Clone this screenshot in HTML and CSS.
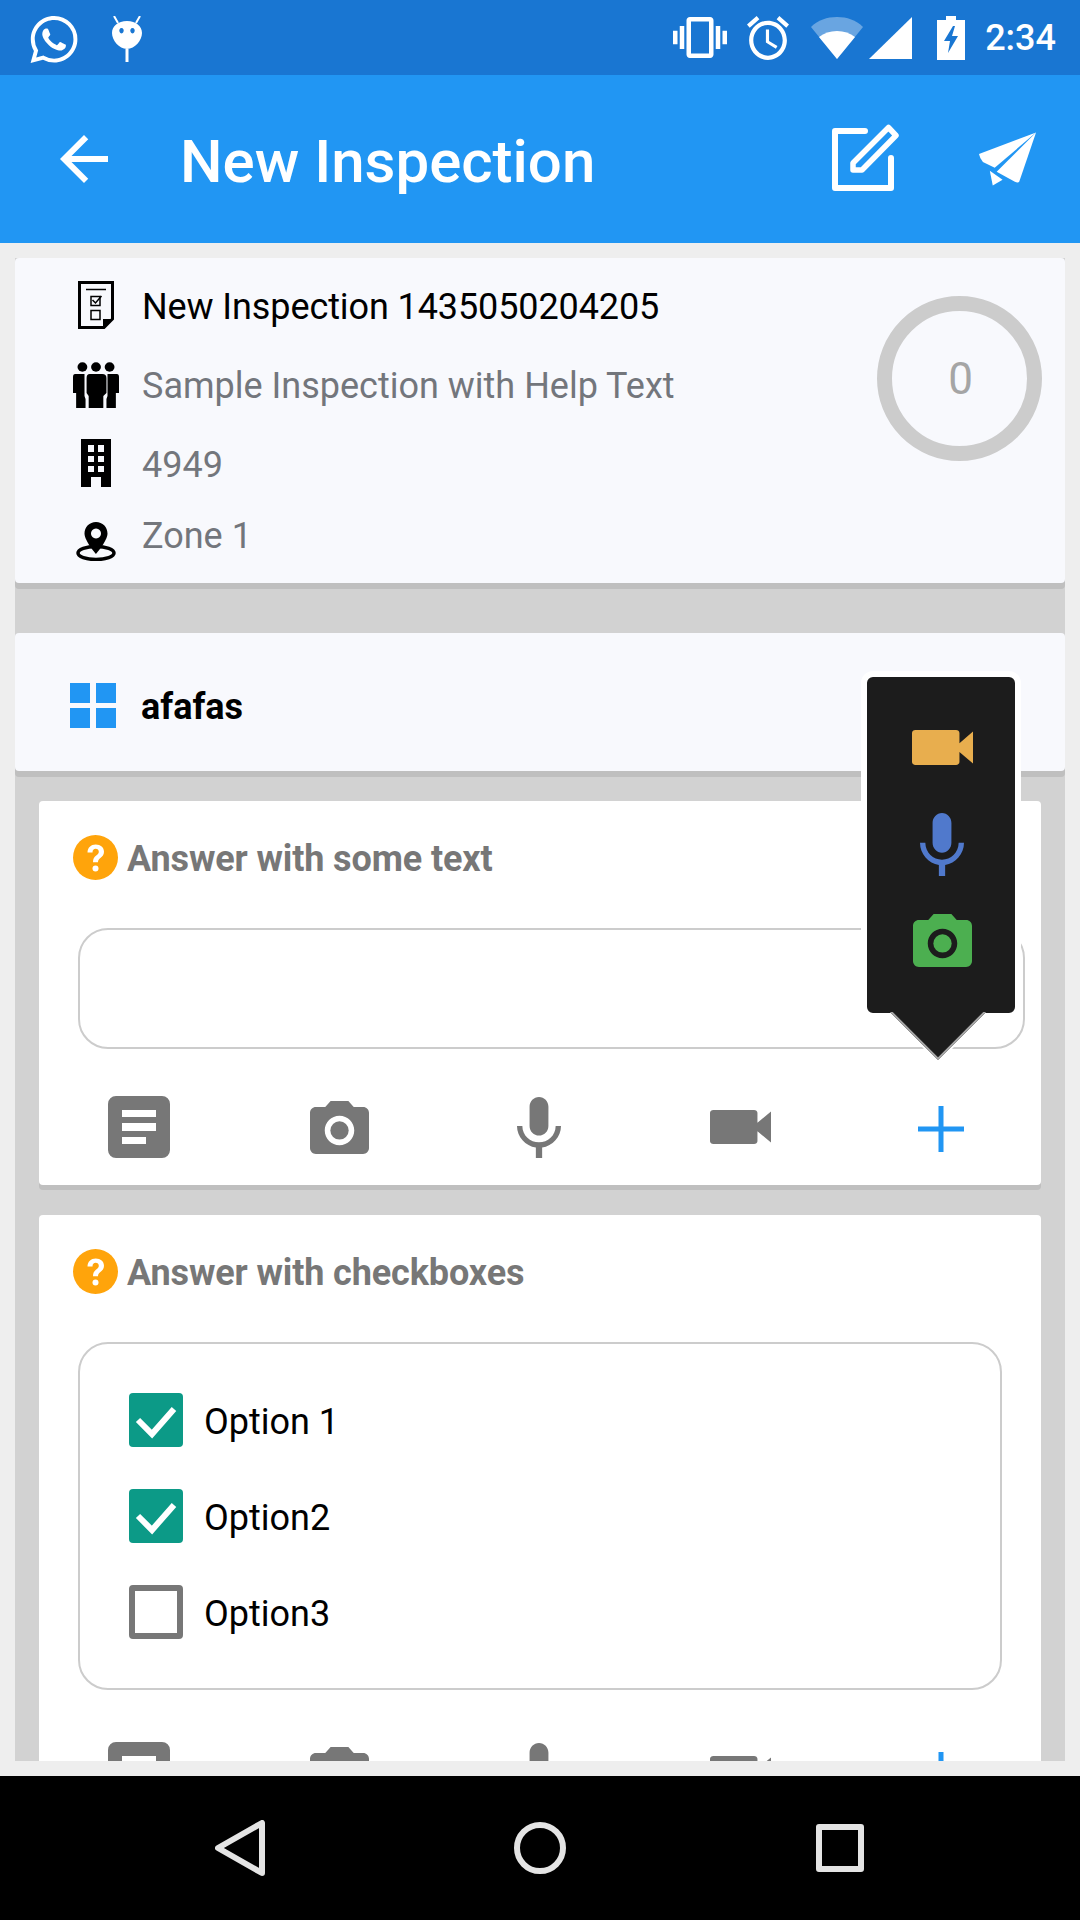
FILE: index.html
```html
<!DOCTYPE html>
<html lang="en">
<head>
<meta charset="utf-8">
<title>New Inspection</title>
<link rel="stylesheet" href="styles.css">
</head>
<body>
<svg class="sprite" aria-hidden="true">
  <symbol id="video" viewBox="3 6 18 12" preserveAspectRatio="none"><path d="M17 10.5V7c0-.55-.45-1-1-1H4c-.55 0-1 .45-1 1v10c0 .55.45 1 1 1h12c.55 0 1-.45 1-1v-3.5l4 4v-11l-4 4z"/></symbol>
  <symbol id="mic" viewBox="5 2 14 19" preserveAspectRatio="none"><path d="M12 14c1.66 0 2.99-1.34 2.99-3L15 5c0-1.66-1.34-3-3-3S9 3.34 9 5v6c0 1.66 1.34 3 3 3zm5.3-3c0 3-2.54 5.1-5.3 5.1S6.7 14 6.7 11H5c0 3.41 2.72 6.23 6 6.72V21h2v-3.28c3.28-.48 6-3.3 6-6.72h-1.7z"/></symbol>
  <symbol id="camera" viewBox="2 2 20 18" preserveAspectRatio="none"><circle cx="12" cy="12" r="3.1"/><path d="M9 2L7.17 4H4c-1.1 0-2 .9-2 2v12c0 1.1.9 2 2 2h16c1.1 0 2-.9 2-2V6c0-1.1-.9-2-2-2h-3.17L15 2H9zm3 15c-2.76 0-5-2.24-5-5s2.24-5 5-5 5 2.24 5 5-2.24 5-5 5z"/></symbol>
  <symbol id="note" viewBox="0 0 62 62"><path fill-rule="evenodd" d="M8 0h46a8 8 0 0 1 8 8v46a8 8 0 0 1-8 8H8a8 8 0 0 1-8-8V8a8 8 0 0 1 8-8zM14 14v7h34v-7zM14 27v8h34v-8zM14 41v7h24v-7z"/></symbol>
  <symbol id="plus" viewBox="0 0 46 46"><path d="M20.5 0h5v20.5H46v5H25.5V46h-5V25.5H0v-5h20.5z"/></symbol>
  <symbol id="question" viewBox="0 0 45 45"><circle cx="22.5" cy="22.5" r="22.5" fill="#ffa40b"/><path d="M14.5 17.5c0-5 3.5-8 8.2-8 4.9 0 8.3 3 8.3 7.2 0 3-1.6 4.7-3.6 6.3-1.8 1.4-2.4 2.3-2.4 4.3h-5c0-3.300 1-4.900 3.200-6.700 1.500-1.200 2.600-2.100 2.600-3.800 0-1.800-1.300-3-3.100-3-2 0-3.200 1.300-3.200 3.700z" fill="#fff"/><circle cx="22.500" cy="33.500" r="3" fill="#fff"/></symbol>
</svg>

<header class="status-bar">
  <div class="status-left">
    <svg class="ic-wa" viewBox="0 0 24 24"><path d="M17.472 14.382c-.297-.149-1.758-.867-2.03-.967-.273-.099-.471-.148-.67.15-.197.297-.767.966-.94 1.164-.173.199-.347.223-.644.075-.297-.15-1.255-.463-2.39-1.475-.883-.788-1.48-1.761-1.653-2.059-.173-.297-.018-.458.13-.606.134-.133.298-.347.446-.52.149-.174.198-.298.298-.497.099-.198.05-.371-.025-.52-.075-.149-.669-1.612-.916-2.207-.242-.579-.487-.5-.669-.51-.173-.008-.371-.01-.57-.01-.198 0-.52.074-.792.372-.272.297-1.04 1.016-1.04 2.479 0 1.462 1.065 2.875 1.213 3.074.149.198 2.096 3.2 5.077 4.487.709.306 1.262.489 1.694.625.712.227 1.36.195 1.871.118.571-.085 1.758-.719 2.006-1.413.248-.694.248-1.289.173-1.413-.074-.124-.272-.198-.57-.347m-5.421 7.403h-.004a9.87 9.87 0 01-5.031-1.378l-.361-.214-3.741.982.998-3.648-.235-.374a9.86 9.86 0 01-1.51-5.26c.001-5.45 4.436-9.884 9.888-9.884 2.64 0 5.122 1.03 6.988 2.898a9.825 9.825 0 012.893 6.994c-.003 5.45-4.437 9.884-9.885 9.884m8.413-18.297A11.815 11.815 0 0012.05 0C5.495 0 .16 5.335.157 11.892c0 2.096.547 4.142 1.588 5.945L.057 24l6.305-1.654a11.882 11.882 0 005.683 1.448h.005c6.554 0 11.89-5.335 11.893-11.893a11.821 11.821 0 00-3.48-8.413z"/></svg>
    <svg class="ic-lolly" viewBox="0 0 32 46"><path d="M3 0l4 7 M29 0l-4 7" stroke="#fff" stroke-width="2" fill="none"/><path fill-rule="evenodd" d="M16 5c9 0 15 5 15 12 0 7-7 16-15 16S1 24 1 17C1 10 7 5 16 5zM10.500 12a2.200 2.700 0 1 0 .01 0zM21.500 12a2.200 2.700 0 1 0 .01 0z"/><path d="M14.500 33h3v13h-3z"/></svg>
  </div>
  <div class="status-right">
    <svg class="ic-vib" viewBox="0 3 24 18" preserveAspectRatio="none"><path d="M0 15h2V9H0v6zm3 2h2V7H3v10zm19-8v6h2V9h-2zm-3 8h2V7h-2v10zM16.500 3h-9C6.670 3 6 3.670 6 4.500v15c0 .83.67 1.500 1.500 1.500h9c.83 0 1.500-.67 1.500-1.500v-15c0-.83-.67-1.500-1.500-1.500zM16 19H8V5h8v14z"/></svg>
    <svg class="ic-alarm" viewBox="2 1.860 20 20.140" preserveAspectRatio="none"><path d="M22 5.720l-4.600-3.860-1.290 1.530 4.600 3.860L22 5.720zM7.880 3.390L6.600 1.860 2 5.710l1.290 1.530 4.590-3.850zM12.500 8H11v6l4.750 2.850.75-1.230-4-2.370V8zM12 4c-4.970 0-9 4.030-9 9s4.020 9 9 9c4.970 0 9-4.030 9-9s-4.030-9-9-9zm0 16c-3.870 0-7-3.130-7-7s3.130-7 7-7 7 3.130 7 7-3.130 7-7 7z"/></svg>
    <svg class="ic-wifi" viewBox="0 0 52 42"><path d="M26 42L0 10C7 3 16 0 26 0s19 3 26 10z" opacity=".35"/><path d="M26 42L8 20c5-4 11-6 18-6s13 2 18 6z"/></svg>
    <svg class="ic-signal" viewBox="0 0 43 42"><path d="M43 0v42H0z"/></svg>
    <svg class="ic-batt" viewBox="0 0 28 44"><path fill-rule="evenodd" d="M9 0h10v4h9v40H0V4h9zM16 10L7 25h6l-2 12 10-17h-6l3-10z"/></svg>
    <span class="clock">2:34</span>
  </div>
</header>

<nav class="app-bar">
  <svg class="ic-back" viewBox="4 4 16 16"><path d="M20 11H7.830l5.590-5.590L12 4l-8 8 8 8 1.410-1.410L7.830 13H20v-2z"/></svg>
  <h1 class="app-title">New Inspection</h1>
  <svg class="ic-edit" viewBox="0 0 68 67"><path d="M33 7H3V64H59V34" fill="none" stroke="#fff" stroke-width="6" stroke-linecap="round" stroke-linejoin="round"/><path d="M21 46V39L56.500 3.500 64 11.500 30 46z" fill="none" stroke="#fff" stroke-width="5.500" stroke-linejoin="round"/></svg>
  <svg class="ic-send" viewBox="0 0 60 54"><path d="M59 0L1 22q1 5 4 8l12 6z"/><path d="M59 0L19 40l18 10q4 2 5 0z"/><path d="M12 39l3 15 10-6z"/></svg>
</nav>

<main class="content">
  <div class="panel">
    <section class="info-card">
      <div class="info-rows">
        <div class="info-row row-a">
          <span class="info-icon"><svg class="ic-doc" viewBox="0 0 36 48"><path d="M1.500 1.500h33V38L26 46.500H1.500z" fill="none" stroke="#000" stroke-width="3"/><path d="M8 8.500h20" stroke="#000" stroke-width="1.500"/><path d="M13 15.500h9v9h-9zM13 29.500h9v9h-9z" fill="none" stroke="#000" stroke-width="1.500"/><path d="M14.500 19l3 3 6-7" fill="none" stroke="#000" stroke-width="1.500"/><path d="M25 47v-9h10z"/></svg></span>
          <span class="info-name">New Inspection 1435050204205</span>
        </div>
        <div class="info-row row-a">
          <span class="info-icon"><svg class="ic-people" viewBox="1 0 44 46" preserveAspectRatio="none"><circle cx="10" cy="5" r="4.700"/><circle cx="23" cy="5" r="4.700"/><circle cx="36" cy="5" r="4.700"/><path d="M3 12h9v22l1 3v9H4V31H1V15q0-3 2-3z"/><path d="M17 12h12q4 0 4 4v15l-3 3v12H16V34l-2-3V16q0-4 3-4z"/><path d="M43 12h-9v22l-1 3v9h9V31h3V15q0-3-2-3z"/></svg></span>
          <span class="info-sub">Sample Inspection with Help Text</span>
        </div>
        <div class="info-row row-b">
          <span class="info-icon"><svg class="ic-building" viewBox="0 0 30 48"><path fill-rule="evenodd" d="M0 0h30v48H20V38H10v10H0zM7 6v7h6V6zM17 6v7h6V6zM7 17v6h6v-6zM17 17v6h6v-6zM7 27v6h6v-6zM17 27v6h6v-6z"/></svg></span>
          <span class="info-sub">4949</span>
        </div>
        <div class="info-row row-c">
          <span class="info-icon"><svg class="ic-pin" viewBox="0 0 40 39"><path fill-rule="evenodd" d="M20 0c6.500 0 11.500 5 11.500 11.500C31.500 19 20 32 20 32S8.500 19 8.500 11.500C8.500 5 13.500 0 20 0zm0 6.500a5 5 0 1 0 .01 0z"/><ellipse cx="20" cy="31" rx="18" ry="6.500" fill="none" stroke="#000" stroke-width="3.500"/></svg></span>
          <span class="info-sub">Zone 1</span>
        </div>
      </div>
      <div class="ring">0</div>
    </section>

    <section class="section-card">
      <svg class="ic-grid" viewBox="0 0 46 45"><path d="M0 0h20v20H0zM26 0h20v20H26zM0 25h20v20H0zM26 25h20v20H26z"/></svg>
      <span class="section-name">afafas</span>
    </section>

    <article class="q-card">
      <div class="q-title"><svg class="ic-q"><use href="#question"/></svg><span>Answer with some text</span></div>
      <div class="text-box"></div>
      <div class="actions">
        <span class="action"><svg class="a-note"><use href="#note"/></svg></span>
        <span class="action"><svg class="a-camera"><use href="#camera"/></svg></span>
        <span class="action"><svg class="a-mic"><use href="#mic"/></svg></span>
        <span class="action"><svg class="a-video"><use href="#video"/></svg></span>
        <span class="action"><svg class="a-plus"><use href="#plus"/></svg></span>
      </div>
    </article>

    <article class="q-card">
      <div class="q-title"><svg class="ic-q"><use href="#question"/></svg><span>Answer with checkboxes</span></div>
      <div class="check-group">
        <label class="check-row"><span class="check on"><svg viewBox="0 0 54 54"><path d="M9 27l14 14 22-25" fill="none" stroke="#fff" stroke-width="6"/></svg></span><span class="check-label">Option 1</span></label>
        <label class="check-row"><span class="check on"><svg viewBox="0 0 54 54"><path d="M9 27l14 14 22-25" fill="none" stroke="#fff" stroke-width="6"/></svg></span><span class="check-label">Option2</span></label>
        <label class="check-row"><span class="check off"></span><span class="check-label">Option3</span></label>
      </div>
      <div class="actions actions-low">
        <span class="action"><svg class="a-note"><use href="#note"/></svg></span>
        <span class="action"><svg class="a-camera"><use href="#camera"/></svg></span>
        <span class="action"><svg class="a-mic"><use href="#mic"/></svg></span>
        <span class="action"><svg class="a-video"><use href="#video"/></svg></span>
        <span class="action"><svg class="a-plus"><use href="#plus"/></svg></span>
      </div>
    </article>
  </div>
</main>

<footer class="nav-bar">
  <svg class="ic-nav-back" viewBox="0 0 50 56"><path d="M47 3v50L3 28z" fill="none" stroke="#e4e4e4" stroke-width="6" stroke-linejoin="round"/></svg>
  <span class="nav-home"></span>
  <span class="nav-recent"></span>
</footer>

<div class="popup">
  <svg class="p-video"><use href="#video"/></svg>
  <svg class="p-mic"><use href="#mic"/></svg>
  <svg class="p-camera"><use href="#camera"/></svg>
</div>
</body>
</html>
```
FILE: styles.css
```css
* { box-sizing: border-box; }
html, body { margin: 0; padding: 0; }
body {
  position: relative;
  width: 1080px;
  height: 1920px;
  overflow: hidden;
  display: flex;
  flex-direction: column;
  font-family: Roboto, "Noto Sans", sans-serif;
  background: #eeeeee;
}
.sprite { display: none; }
svg { display: block; flex: none; }

/* status bar */
.status-bar {
  height: 75px;
  flex: none;
  background: #1976d2;
  display: flex;
  align-items: center;
  justify-content: space-between;
  padding: 0 24px 0 30px;
  fill: #fff;
  color: #fff;
}
.status-left, .status-right { display: flex; align-items: center; }
.ic-wa { width: 48px; height: 47px; margin-top: 3px; }
.ic-lolly { width: 32px; height: 46px; margin-left: 33px; margin-top: 3px; }
.ic-vib { width: 54px; height: 41px; }
.ic-alarm { width: 42px; height: 44px; margin-left: 20px; }
.ic-wifi { width: 52px; height: 42px; margin-left: 22px; }
.ic-signal { width: 43px; height: 42px; margin-left: 6px; }
.ic-batt { width: 28px; height: 44px; margin-left: 25px; }
.clock { font-size: 36px; font-weight: 500; margin-left: 20px; line-height: 44px; }

/* app bar */
.app-bar {
  height: 168px;
  flex: none;
  background: #2196f3;
  display: flex;
  align-items: center;
  padding: 0 43px 0 60px;
  fill: #fff;
}
.ic-back { width: 48px; height: 48px; }
.app-title {
  flex: 1;
  margin: 4px 0 0 72px;
  font-size: 60px;
  font-weight: 500;
  color: #fff;
  white-space: nowrap;
}
.ic-edit { width: 68px; height: 67px; margin-top: -3px; }
.ic-send { width: 59px; height: 54px; margin-left: 78px; }

/* content */
.content {
  flex: 1;
  min-height: 0;
  padding: 15px;
  display: flex;
}
.panel {
  flex: 1;
  background: #d2d2d2;
  overflow: hidden;
}

/* info card */
.info-card {
  display: flex;
  justify-content: space-between;
  align-items: flex-start;
  height: 325px;
  padding-top: 8px;
  padding-right: 23px;
  background: #f8f9fd;
  border-radius: 4px;
  box-shadow: 0 6px 0 #bfbfbf;
}
.info-rows { display: flex; flex-direction: column; }
.info-row { display: flex; align-items: center; font-size: 36px; }
.row-a { height: 80px; }
.row-b { height: 76px; }
.row-c { height: 68px; }
.info-icon {
  width: 77px;
  margin-left: 50px;
  padding-right: 16px;
  display: flex;
  justify-content: center;
}
.info-name { color: #000; letter-spacing: -0.1px; margin-top: 2px; }
.info-sub { color: #73767c; }
.row-b .info-sub { margin-top: 2px; }
.ic-doc { width: 36px; height: 48px; margin-top: -2px; }
.ic-people { width: 46px; height: 46px; margin-top: -2px; }
.ic-building { width: 30px; height: 48px; margin-top: -2px; }
.ic-pin { width: 40px; height: 39px; margin-top: 10px; }
.ring {
  width: 165px;
  height: 165px;
  margin-top: 30px;
  padding-left: 2px;
  border: 15px solid #cccccc;
  border-radius: 50%;
  display: flex;
  align-items: center;
  justify-content: center;
  font-size: 44px;
  color: #a5a5a5;
}

/* section */
.section-card {
  height: 138px;
  margin-top: 50px;
  padding: 7px 0 0 55px;
  display: flex;
  align-items: center;
  gap: 25px;
  background: #f8f9fd;
  border-radius: 4px;
  box-shadow: 0 6px 0 #bfbfbf;
}
.ic-grid { width: 46px; height: 45px; fill: #2196f3; }
.section-name { font-size: 36px; font-weight: 700; color: #000; margin-top: 3px; }

/* question cards */
.q-card {
  margin: 30px 24px 0;
  background: #fff;
  border-radius: 4px;
  box-shadow: 0 5px 0 #bfbfbf;
  padding: 34px 0 27px;
}
.q-title {
  display: flex;
  align-items: center;
  gap: 9px;
  margin-left: 34px;
  height: 45px;
  font-size: 36px;
  font-weight: 700;
  color: #777777;
  letter-spacing: -0.12px;
}
.q-title span { margin-top: 2px; }
.ic-q { width: 45px; height: 45px; }
.text-box {
  height: 121px;
  margin: 48px 16px 0 39px;
  border: 2px solid #cccccc;
  border-radius: 30px;
}
.actions {
  display: grid;
  grid-template-columns: repeat(5, 1fr);
  align-items: center;
  height: 62px;
  margin-top: 47px;
  fill: #777777;
}
.actions-low { margin-top: 52px; }
.action { display: flex; justify-content: center; align-items: center; }
.a-note { width: 62px; height: 62px; }
.a-camera { width: 59px; height: 53px; }
.a-mic { width: 44px; height: 61px; margin-right: 2px; }
.a-video { width: 61px; height: 34px; }
.a-plus { width: 46px; height: 46px; fill: #2196f3; margin-top: 4px; }

.check-group {
  width: 924px;
  height: 348px;
  margin: 48px 0 0 39px;
  padding: 49px 0 0 49px;
  border: 2px solid #cccccc;
  border-radius: 30px;
  display: flex;
  flex-direction: column;
  gap: 42px;
}
.check-row {
  display: flex;
  align-items: center;
  gap: 21px;
  font-size: 36px;
  color: #000;
}
.check-label { margin-top: 4px; }
.check { width: 54px; height: 54px; border-radius: 4px; flex: none; }
.check.on { background: #0c9a87; }
.check.on svg { width: 54px; height: 54px; }
.check.off { border: 6px solid #777777; }

/* nav */
.nav-bar {
  height: 144px;
  flex: none;
  background: #000;
  display: flex;
  align-items: center;
  padding-left: 215px;
}
.ic-nav-back { width: 50px; height: 56px; }
.nav-home {
  width: 52px;
  height: 52px;
  margin-left: 249px;
  border: 6px solid #e4e4e4;
  border-radius: 50%;
}
.nav-recent {
  width: 48px;
  height: 48px;
  margin-left: 250px;
  border: 6px solid #e4e4e4;
  border-radius: 3px;
}

/* popup */
.popup {
  position: absolute;
  left: 861px;
  top: 671px;
  width: 160px;
  height: 348px;
  padding-left: 2px;
  border: 6px solid #ffffff;
  border-radius: 12px;
  background: #1c1c1c;
  display: flex;
  flex-direction: column;
  align-items: center;
}
.popup::after {
  content: "";
  position: absolute;
  left: 37px;
  top: 301px;
  width: 66px;
  height: 66px;
  transform: rotate(45deg);
  background: #1c1c1c;
  border-right: 2px solid #a8a8a8;
  border-bottom: 2px solid #a8a8a8;
  box-shadow: 2px 2px 0 #ffffff;
  clip-path: polygon(110% -10%, 110% 110%, -10% 110%);
}
.p-video { width: 61px; height: 35px; margin-top: 53px; fill: #e8ae4e; }
.p-mic { width: 44px; height: 63px; margin-top: 48px; fill: #5079cc; }
.p-camera { width: 59px; height: 53px; margin-top: 38px; fill: #4caf50; }
```
